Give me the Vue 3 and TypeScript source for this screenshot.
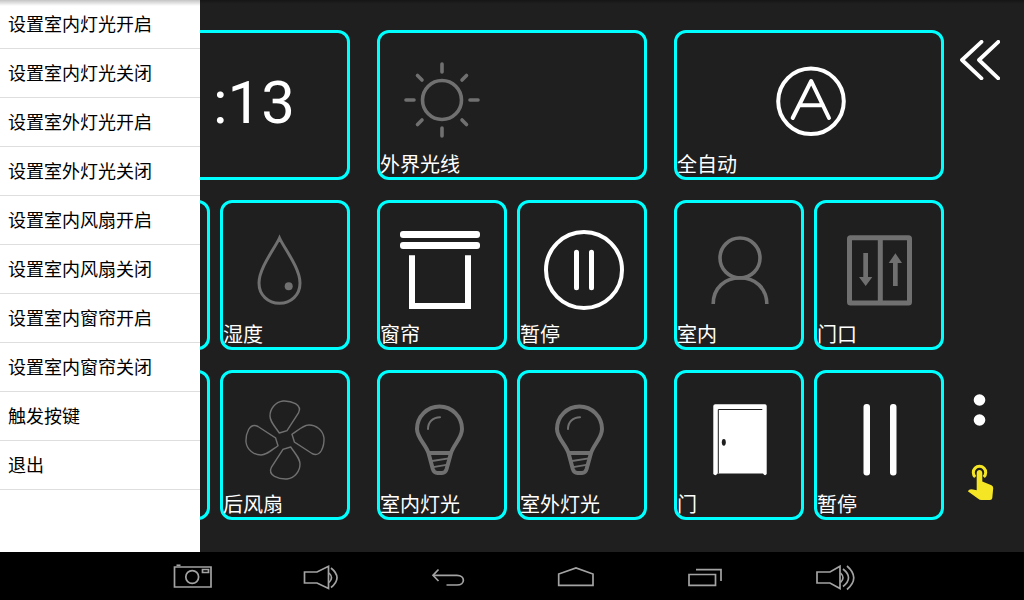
<script setup lang="ts">
interface Tile {
  icon: string
  label: string
  name?: string
  on?: boolean
  wide?: boolean
}

const menu: string[] = [
  '设置室内灯光开启',
  '设置室内灯光关闭',
  '设置室外灯光开启',
  '设置室外灯光关闭',
  '设置室内风扇开启',
  '设置室内风扇关闭',
  '设置室内窗帘开启',
  '设置室内窗帘关闭',
  '触发按键',
  '退出',
]

const groups: Tile[][] = [
  [
    { icon: 'clock', label: '', name: '时间', on: true, wide: true },
    { icon: 'none', label: '', name: '温度' },
    { icon: 'drop', label: '湿度' },
    { icon: 'none', label: '', name: '前风扇' },
    { icon: 'fan', label: '后风扇' },
  ],
  [
    { icon: 'sun', label: '外界光线', wide: true },
    { icon: 'curtain', label: '窗帘', on: true },
    { icon: 'pause-round', label: '暂停', on: true },
    { icon: 'bulb', label: '室内灯光' },
    { icon: 'bulb', label: '室外灯光' },
  ],
  [
    { icon: 'auto', label: '全自动', on: true, wide: true },
    { icon: 'person', label: '室内' },
    { icon: 'lift', label: '门口' },
    { icon: 'door', label: '门', on: true },
    { icon: 'pause', label: '暂停', on: true },
  ],
]

const blade =
  'M34.3 33 L42 30.6 L53.5 13 C55.5 9 54.5 6 50.5 3.6 C46 1.2 42 .8 38 1 C30 2 25 9 25 16 C25 21 28 24 34.3 33 Z'

const nav = [
  { name: '截图', paths: ['M6.5 15 H43 V35 H6.5 Z', 'M8.5 13.3 H12.5', 'M17.8 25 a6.4 6.4 0 1 0 12.8 0 a6.4 6.4 0 1 0 -12.8 0', 'M34.5 17.5 H40.5 V20.5 H34.5 Z'] },
  { name: '音量减', paths: ['M8.5 20 H21 L32.5 14.3 V36.5 L21 31 H8.5 Z', 'M33 21 Q38 25.7 33 30.5', 'M35 16 Q47 25.7 35 35.5'] },
  { name: '返回', paths: ['M14.5 17.5 L9 23.3 L14.5 29', 'M9 23.3 H33 C41.5 23.3 41.5 33 33 33 H22.5'] },
  { name: '主页', paths: ['M6.7 33.3 V22 L24 16 L41 22 V33.3 Z'] },
  { name: '最近任务', paths: ['M9 22.5 H35.5 V33.3 H9 Z', 'M16 17.7 H41 V29'] },
  { name: '音量加', paths: ['M9 20 H22 L32 14.3 V36.5 L22 31 H9 Z', 'M32.5 21 Q37.5 25.7 32.5 30.5', 'M35 17 Q46 25.7 35 34.5', 'M39 14 Q52.5 25.7 39 37.5'] },
]
</script>

<template>
  <div class="screen">
    <main class="board">
      <section v-for="(group, g) in groups" :key="g" class="group">
        <button
          v-for="(tile, t) in group"
          :key="t"
          type="button"
          class="tile"
          :class="[{ wide: tile.wide, on: tile.on }, tile.icon]"
          :aria-label="tile.name"
        >
          <span v-if="tile.icon === 'clock'" class="time">:13</span>
          <svg v-else class="icon" viewBox="0 0 80 80" aria-hidden="true">
            <g v-if="tile.icon === 'sun'" stroke-width="3.6" stroke-linecap="round">
              <circle cx="40" cy="40" r="19.5" />
              <path d="M40 4 V12 M40 68 V76 M4 40 H12 M68 40 H76 M15.5 15.5 L20 20 M60 20 L64.5 15.5 M15.5 64.5 L20 60 M60 60 L64.5 64.5" />
            </g>
            <g v-else-if="tile.icon === 'auto'" stroke-width="4" stroke-linecap="round" stroke-linejoin="round">
              <circle cx="42" cy="41.3" r="32.8" />
              <path d="M23.7 58 L42.2 21 L60 58 M31 45.3 H54" />
            </g>
            <g v-else-if="tile.icon === 'drop'" stroke-width="3">
              <path d="M34.5 8 C30 18 14 38 14 53 C14 65 23 73.3 34.5 73.3 C46 73.3 55 65 55 53 C55 38 39 18 34.5 8 Z" />
              <circle class="solid" cx="43.7" cy="56.3" r="4" />
            </g>
            <g v-else-if="tile.icon === 'fan'" stroke-width="1.4">
              <path v-for="a in [0, 90, 180, 270]" :key="a" :d="blade" :transform="`rotate(${a} 40 40)`" />
            </g>
            <g v-else-if="tile.icon === 'curtain'">
              <rect class="solid" x="-2" y="1" width="80" height="7" rx="3" />
              <rect class="solid" x="-2" y="12" width="80" height="7" rx="3" />
              <path stroke-width="6" d="M10 25.3 V76 H66 V25.3" />
            </g>
            <g v-else-if="tile.icon === 'pause-round'">
              <circle cx="42" cy="40" r="38" stroke-width="4" />
              <path stroke-width="5" stroke-linecap="round" d="M34.5 22.3 V57.7 M49.5 22.3 V57.7" />
            </g>
            <g v-else-if="tile.icon === 'person'" stroke-width="3.6">
              <circle cx="41" cy="28" r="20" />
              <path d="M14.2 74 C14.2 58 26 47.8 41 47.8 C56 47.8 67.8 58 67.8 74" />
            </g>
            <g v-else-if="tile.icon === 'lift'">
              <rect x="10.5" y="7.7" width="60" height="65.3" rx="1" stroke-width="5" />
              <path stroke-width="5" d="M41.3 8 V73" />
              <path class="solid" d="M24.3 23 H29 V47 H33.3 L26.7 56 L20 47 H24.3 Z" />
              <path class="solid" d="M54 56 H58.7 V33 H63 L56.4 23.3 L49.7 33 H54 Z" />
            </g>
            <g v-else-if="tile.icon === 'bulb'" stroke-width="4">
              <path d="M26.5 53 C23.5 44 15 38 15 29 A22.5 22.5 0 0 1 60 29 C60 38 52 44 49 53 L44.6 69 Q43.4 73 40 73 H35.5 Q32 73 30.8 69 Z M26.5 53 H49" />
              <path stroke-width="1.8" d="M30 61 L47 58.3 M31 67.2 L46 64.7" />
              <path stroke-width="2" stroke-linecap="round" d="M26 29 C26 22 31 17.3 38 17.3" />
            </g>
            <g v-else-if="tile.icon === 'door'">
              <path class="solid" d="M16.3 4.3 H66 Q67.7 4.3 67.7 6 V74 Q66 76.5 64 73.5 H18.5 Q16.5 76.5 14.3 74 V6 Q14.3 4.3 16.3 4.3 Z" />
              <path class="cut" d="M19.3 73.5 V9.5 H63.3" />
              <ellipse class="hole" cx="24.8" cy="42.3" rx="2" ry="3.4" />
            </g>
            <g v-else-if="tile.icon === 'pause'">
              <rect class="solid" x="24.5" y="4" width="6.5" height="71.5" rx="3" />
              <rect class="solid" x="51" y="4" width="6.5" height="71.5" rx="3" />
            </g>
          </svg>
          <span v-if="tile.label" class="label">{{ tile.label }}</span>
        </button>
      </section>

      <aside class="side">
        <button type="button" class="side-button" aria-label="上一页">
          <svg width="40" height="40" viewBox="0 0 40 40" fill="none" stroke="#fff" stroke-width="3.8" stroke-linecap="round" stroke-linejoin="round">
            <path d="M21.5 1.8 L2 20 L21.5 38.3 M38.3 1.8 L19 20 L38.3 38.3" />
          </svg>
        </button>
        <div class="side-tools">
          <button type="button" class="side-button" aria-label="更多">
            <svg width="40" height="40" viewBox="0 0 40 40" fill="#fff">
              <circle cx="19.5" cy="10" r="5.8" />
              <circle cx="19.5" cy="30" r="5.8" />
            </svg>
          </button>
          <button type="button" class="side-button" aria-label="触摸">
            <svg width="40" height="40" viewBox="0 0 40 40" fill="#f5e625">
              <path d="M15.2 17 A6.2 6.2 0 1 1 23.8 17" fill="none" stroke="#f5e625" stroke-width="3" />
              <path d="M16.7 13 C16.7 9 22.3 9 22.3 13 V21.5 L31.5 25.2 Q33.4 26 33.2 28.2 L32.3 38 Q32 40 30 40 H21.5 Q19.5 40 18.2 38.8 L7.8 31.3 Q9.5 28.3 13 29.6 L16.7 30.3 Z" />
            </svg>
          </button>
        </div>
      </aside>

      <nav class="drawer" aria-label="菜单">
        <button v-for="item in menu" :key="item" type="button" class="drawer-item">{{ item }}</button>
      </nav>
    </main>

    <footer class="system-bar">
      <button v-for="key in nav" :key="key.name" type="button" class="system-key" :aria-label="key.name">
        <svg width="48" height="48" viewBox="0 0 48 48" fill="none" stroke="#a3a3a3" stroke-width="1.7">
          <path v-for="d in key.paths" :key="d" :d="d" />
        </svg>
      </button>
    </footer>
  </div>
</template>

<style>
body {
  margin: 0;
  background: #000;
}
</style>

<style scoped>
.screen {
  display: flex;
  flex-direction: column;
  min-height: 100vh;
  background: #1f1f1f;
  font-family: Roboto, "Noto Sans CJK SC", sans-serif;
}

button {
  box-sizing: border-box;
  margin: 0;
  padding: 0;
  border: 0;
  background: none;
  font: inherit;
  cursor: pointer;
}

svg {
  display: block;
}

.board {
  position: relative;
  flex: 1;
  display: grid;
  grid-template-columns: repeat(3, 1fr) auto;
  column-gap: 27px;
  align-items: start;
  padding: 30px 24px 32px 80px;
  background: linear-gradient(#151515, #1f1f1f 4px);
}

.group {
  display: grid;
  grid-template-columns: 1fr 1fr;
  gap: 20px 10px;
}

.tile {
  display: flex;
  flex-direction: column;
  align-items: center;
  min-height: 150px;
  padding: 27px 0 0;
  border: 3px solid #00ffff;
  border-radius: 12px;
  color: #707070;
}

.tile.wide {
  grid-column: span 2;
}

.tile.on {
  color: #fff;
}

.icon {
  width: 80px;
  height: 80px;
  overflow: visible;
  fill: none;
  stroke: currentColor;
}

.sun .icon {
  align-self: flex-start;
  margin-left: 22px;
}

.solid {
  fill: currentColor;
  stroke: none;
}

.cut {
  stroke: #1f1f1f;
  stroke-width: 1;
}

.hole {
  fill: #1f1f1f;
  stroke: none;
}

.label {
  align-self: stretch;
  margin-top: 13px;
  color: #fff;
  font-size: 20px;
  line-height: 24px;
  text-align: left;
}

.time {
  align-self: flex-end;
  margin-right: 52px;
  font-size: 60px;
  line-height: 86px;
}

.side {
  align-self: stretch;
  display: flex;
  flex-direction: column;
  justify-content: space-between;
  margin-left: -11px;
  padding: 10px 0 20px;
}

.side-button {
  display: block;
}

.side-tools {
  display: grid;
  gap: 30px;
}

.drawer {
  position: absolute;
  inset: 0 auto 0 0;
  width: 200px;
  background: linear-gradient(#c4c4c4, #fff 6px);
}

.drawer-item {
  display: block;
  width: 100%;
  padding: 13px 8px 11px;
  border-bottom: 1px solid #dedede;
  color: #000;
  font-size: 18px;
  line-height: 24px;
  text-align: left;
}

.system-bar {
  display: flex;
  justify-content: center;
  background: #000;
}

.system-key {
  display: flex;
  justify-content: center;
  width: 12.5%;
}
</style>
